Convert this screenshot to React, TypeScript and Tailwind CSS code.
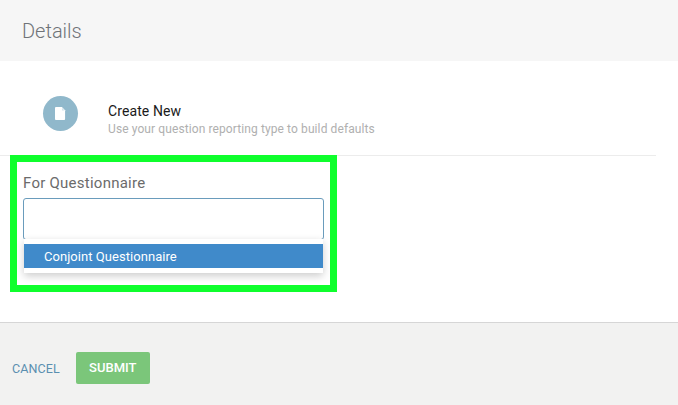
function FileIcon() {
  return (
    <svg viewBox="0 0 12 14" className="w-[11px] h-[13px]">
      <path d="M1 0h6.5L11 3.5V13a1 1 0 0 1-1 1H1a1 1 0 0 1-1-1V1a1 1 0 0 1 1-1z" fill="#fff" />
      <path d="M7.6 0.6 10.6 3.6H7.6z" fill="#d5e4ec" />
    </svg>
  );
}

export default function App() {
  return (
    <div className="w-[678px] h-[405px] flex flex-col bg-white overflow-hidden font-['Roboto',sans-serif]">
      <div className="h-[61px] shrink-0 bg-[#f6f6f6] flex items-center pl-[22px] pt-[1px]">
        <h1 className="text-[20px] font-light text-[#6f7378]">Details</h1>
      </div>

      <div className="flex-1 flex flex-col">
        <div className="h-[95px] mr-[22px] flex items-center pl-[43px] pt-[10px] border-b border-[#ececec] -mb-px">
          <div className="w-[35px] h-[35px] rounded-full bg-[#90b8cb] flex items-center justify-center shrink-0">
            <FileIcon />
          </div>
          <div className="ml-[30px] mt-[13px]">
            <div className="text-[14px] leading-[18px] tracking-[0.1px] text-[#1a1a1a]">Create New</div>
            <div className="text-[12px] leading-[18px] tracking-[0.1px] text-[#b0b0b0]">Use your question reporting type to build defaults</div>
          </div>
        </div>

        <div className="relative ml-[10px] w-[327px] h-[137px] border-[7px] border-[#0fff2d] px-[6px] pt-[11px]">
          <label className="block text-[15px] leading-[20px] tracking-[0.25px] text-[#6b6b6b]">For Questionnaire</label>
          <div className="mt-[5px] w-[301px] h-[42px] border border-[#6a9cbc] rounded-[3px] bg-white" />
          <div className="absolute left-[7px] top-[77px] w-[299px] py-[5px] bg-white shadow-[0_3px_8px_rgba(0,0,0,0.2)]">
            <div className="h-[24px] bg-[#408aca] text-white text-[13px] font-[450] leading-[25px] tracking-[0.05px] pl-[20px]">Conjoint Questionnaire</div>
          </div>
        </div>
      </div>

      <div className="h-[83px] shrink-0 bg-[#f2f2f1] border-t border-[#d6d6d6] flex items-center pl-[12px] pt-[8px]">
        <button className="text-[12.5px] leading-[17px] pt-[1px] font-normal text-[#5a8fb0] tracking-[0.1px]">CANCEL</button>
        <button className="ml-[16px] w-[74px] h-[32px] rounded-[2px] bg-[#7bc67a] text-white text-[13px] font-medium">SUBMIT</button>
      </div>
    </div>
  );
}
